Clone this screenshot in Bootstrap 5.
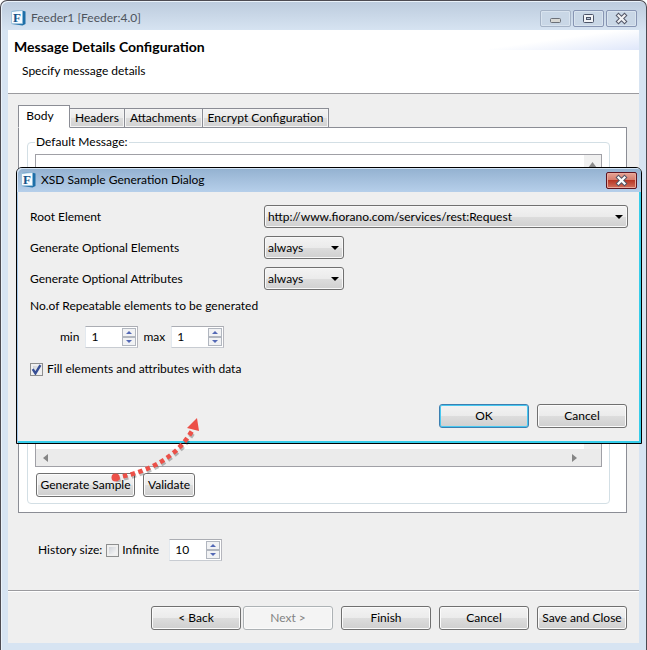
<!DOCTYPE html>
<html lang="en">
<head>
<meta charset="utf-8">
<meta name="viewport" content="width=device-width, initial-scale=1">
<title>Feeder1 [Feeder:4.0]</title>
<link href="https://cdn.jsdelivr.net/npm/bootstrap@5.3.0/dist/css/bootstrap.min.css" rel="stylesheet">
<style>
body { font-family: Lato, "Open Sans", sans-serif; font-size: 12px; line-height: 16px; color: #000; background: #fff; }
.app-window { min-height: 100vh; border: 1px solid #4d4b52; border-width: 1px 1px 0; border-radius: 7px 7px 0 0; background: linear-gradient(#bccbdd, #d7e4f2 30px); padding: 0 7px 7px; box-shadow: inset 1px 1px 0 #eaf2fa; }
.title-bar { height: 29px; padding: 4px 2px 0 3px; gap: 5px; }
.app-window > .title-bar { color: #4e545c; padding-top: 5px; }
.win-btn { width: 31px; height: 17px; padding: 0; border: 1px solid #8795b3; border-radius: 2px; background: #c9d7e6; line-height: 0; box-shadow: inset 0 0 0 1px #d9e4ef; }
.win-btn.quiet { border-color: #a5b3c6; }
.win-btn.quiet, .win-btn.mid { margin-right: 2px; }
.win-btn.close-red { border-color: #5d1420; background: linear-gradient(#e5a496, #d67b6b 48%, #b73625 50%, #d2705c); box-shadow: inset 0 0 0 1px #e9a99c; }
.client { background: #efefef; }
.page-head { height: 64px; background: linear-gradient(172deg, transparent 45%, #dfe7fa) right top / 150px 20px no-repeat #fff; border-bottom: 1px solid #9b9b9f; padding: 8px 6px; }
.page-head h1 { font-size: 14px; line-height: 18px; font-weight: 700; margin: 0 0 7px; }
.page-head p { padding-left: 8px; margin: 0; }
.tab-area { padding: 11px 12px 0 10px; }
.tab-row { position: relative; margin-bottom: -1px; }
.tab-btn { height: 20px; padding: 0 5px; border: 1px solid #8b8d95; border-left-width: 0; background: linear-gradient(#f3f3f3, #ebebeb 50%, #dcdcdc 52%, #d2d2d2); box-shadow: inset 0 0 0 1px #f5f5f5; line-height: 18px; }
.tab-btn.current { width: 52px; height: 23px; border-left-width: 1px; border-bottom-color: #fff; background: #fff; padding: 0 15px 2px 7px; box-shadow: none; }
.tab-pane-box { background: #fff; border: 1px solid #8b8d95; padding: 6px 16px 8px 8px; }
.group { border: 1px solid #d3dfe5; border-radius: 4px; padding: 4px 7px 6px; margin: 0; }
.group legend { float: none; width: auto; font-size: 12px; line-height: 16px; margin: 0; padding: 0 2px 0 1px; }
.editor { border: 1px solid #a0a0a6; margin-bottom: 6px; }
.editor textarea { border: 0; resize: none; height: 294px; outline: 0; padding: 2px; display: block; min-width: 0; }
.bar-v { width: 17px; background: #f0f0f0; text-align: center; line-height: 0; padding-top: 7px; }
.bar-h { height: 17px; background: #ebebeb; padding: 0 24px 0 7px; }
.editor-actions { padding-left: 1px; }
.cbtn { height: 24px; min-width: 90px; padding: 0 3px; font-size: 12px; line-height: 20px; color: #000; border: 1px solid #707070; border-radius: 3px; background: linear-gradient(#f3f3f3, #ebebeb 50%, #dddddd 51%, #cfcfcf); box-shadow: inset 0 0 0 1px #fbfbfb; white-space: nowrap; }
.cbtn.fit { min-width: 52px; }
.cbtn.wide { min-width: 99px; }
.cbtn:disabled { color: #838383; border-color: #adb2b5; background: #f4f4f4; }
.cbtn.primary { border-color: #3c7fb1; box-shadow: inset 0 0 0 1px #48c8f0; }
.spin { width: 53px; height: 22px; border: 1px solid #e3e9ef; border-top-color: #abadb3; border-right: 1px solid #b5b6bd; border-bottom-color: #c8ccd2; background: #fff; padding: 1px; }
.spin input { width: 35px; border: 0; outline: 0; padding: 0 0 0 4px; line-height: 16px; appearance: textfield; -moz-appearance: textfield; background: transparent; }
.spin input::-webkit-inner-spin-button { appearance: none; -webkit-appearance: none; margin: 0; }
.spin button { width: 14px; height: 9px; border: 1px solid #b1b6bf; background: #f1f2f4; padding: 0; line-height: 0; display: flex; align-items: center; justify-content: center; }
.tick { appearance: none; -webkit-appearance: none; width: 13px; height: 13px; margin: 0; border: 1px solid #8e8f8f; background: linear-gradient(135deg, #cfd3d9, #f6f6f6) content-box #f4f4f4; padding: 2px; }
.tick:checked { background: url("data:image/svg+xml,%3Csvg xmlns='http://www.w3.org/2000/svg' viewBox='0 0 11 11'%3E%3Cpath d='M2.3 5.2 4.6 8.8 8.8 1.8' fill='none' stroke='%23374f95' stroke-width='2'/%3E%3C/svg%3E") border-box, linear-gradient(135deg, #cfd3d9, #f6f6f6) content-box #f4f4f4; }
.history { padding: 26px 0 0 30px; }
.history .tick { margin: 0 3px 0 4px; }
.history .spin { margin-left: 10px; }
.foot { border-top: 1px solid #9b9b9f; box-shadow: inset 0 1px 0 #fff; padding: 15px 12px 13px; }
.foot .step-pair { gap: 2px; }
.dialog { position: absolute; left: 15px; right: 4px; top: 166px; border: 1px solid #000; border-radius: 6px 6px 0 0; background: #efefef; box-shadow: inset 1px 0 0 #a9c9ea, inset -2px -2px 0 #36cdea; padding-bottom: 15px; }
.dialog .title-bar { height: 24px; background: linear-gradient(#93b1d0, #b6cfea); border-radius: 5px 5px 0 0; padding: 4px 4px 0 4px; box-shadow: inset 1px 1px 0 #d5e5f5; }
.dialog-body { padding: 13px 13px 0; }
.field-row { height: 23px; margin-bottom: 8px; }
.field-row label { width: 234px; flex: none; }
.repeat-row { margin: 12px 0 13px; padding-left: 30px; }
.repeat-row label { margin-right: 6px; }
.repeat-row .spin + label { margin-left: 5px; }
.dialog-actions { margin-top: 27px; padding-right: 1px; }
.combo { appearance: none; -webkit-appearance: none; height: 23px; width: 80px; border: 1px solid #707070; border-radius: 3px; padding: 0 16px 0 3px; color: #000; background: url("data:image/svg+xml,%3Csvg xmlns='http://www.w3.org/2000/svg' width='8' height='4'%3E%3Cpath d='M0 0h8L4 4z'/%3E%3C/svg%3E") right 4px center no-repeat, linear-gradient(#f3f3f3, #ebebeb 50%, #dddddd 51%, #d0d0d0); box-shadow: inset 0 0 0 1px #f8f8f8; }
.combo.full { width: auto; flex: 1; }
.pointer-arrow { position: absolute; left: 105px; top: 410px; pointer-events: none; }
.logo { flex: none; }
</style>
</head>
<body>
<div class="app-window d-flex flex-column position-relative">
  <header class="title-bar d-flex align-items-start">
    <svg class="logo mt-1" width="15" height="16" viewBox="0 0 15 16"><path d="M1 1l10-.6 3.500 1V14l-3 1.600L1 14z" fill="#1e6fa8"/><path d="M.5 1.500 11.500.5v13.200L.5 13.700z" fill="#f6fbff" stroke="#8cbad8" stroke-width=".7"/><text x="2" y="11.500" font-family="Liberation Serif, serif" font-weight="700" font-size="13" fill="#15548a">F</text></svg>
    <span class="flex-grow-1 pt-1">Feeder1 [Feeder:4.0]</span>
    <div class="d-flex pt-1">
      <button class="win-btn quiet" type="button" aria-label="Minimize"><svg width="29" height="15"><rect x="9.500" y="7.500" width="10" height="4" rx="1" fill="#d8d8d4" stroke="#6b7078"/></svg></button>
      <button class="win-btn mid" type="button" aria-label="Maximize"><svg width="29" height="15"><rect x="9.500" y="3.500" width="10" height="8" rx="1" fill="#f2f4f7" stroke="#4c5468"/><rect x="12.500" y="6.500" width="4" height="2" fill="#b9c7d8" stroke="#4c5468"/></svg></button>
      <button class="win-btn" type="button" aria-label="Close"><svg width="29" height="15"><path d="M11.500 4.500l6 6M17.500 4.500l-6 6" stroke="#535666" stroke-width="4.200" stroke-linecap="square"/><path d="M11.500 4.500l6 6M17.500 4.500l-6 6" stroke="#f1f2f4" stroke-width="2.200" stroke-linecap="square"/></svg></button>
    </div>
  </header>

  <main class="client flex-grow-1 d-flex flex-column">
    <section class="page-head">
      <h1>Message Details Configuration</h1>
      <p>Specify message details</p>
    </section>

    <section class="tab-area">
      <div class="tab-row d-flex align-items-end" role="tablist">
        <button class="tab-btn current" type="button" role="tab" aria-selected="true">Body</button>
        <button class="tab-btn" type="button" role="tab">Headers</button>
        <button class="tab-btn" type="button" role="tab">Attachments</button>
        <button class="tab-btn" type="button" role="tab">Encrypt Configuration</button>
      </div>
      <div class="tab-pane-box">
        <fieldset class="group">
          <legend>Default Message:</legend>
          <div class="editor">
            <div class="d-flex">
              <textarea class="flex-grow-1" aria-label="Default Message"></textarea>
              <div class="bar-v"><svg width="9" height="6"><path d="M4.500 0 9 6H0z" fill="#8c8c8c"/></svg></div>
            </div>
            <div class="bar-h d-flex justify-content-between align-items-center">
              <svg width="5" height="8"><path d="M5 0v8L0 4z" fill="#858585"/></svg>
              <svg width="5" height="8"><path d="M0 0v8l5-4z" fill="#858585"/></svg>
            </div>
          </div>
          <div class="editor-actions d-flex gap-2">
            <button class="cbtn wide" type="button">Generate Sample</button>
            <button class="cbtn fit" type="button">Validate</button>
          </div>
        </fieldset>
      </div>
    </section>

    <section class="history d-flex align-items-center">
      <span id="hist">History size:</span>
      <input class="tick" type="checkbox" id="inf"><label for="inf">Infinite</label>
      <div class="spin d-flex align-items-center"><input type="number" value="10" aria-labelledby="hist">
        <div><button type="button" aria-label="Increase"><svg width="6" height="3"><path d="M3 0l3 3H0z" fill="#5368b5"/></svg></button><button type="button" aria-label="Decrease"><svg width="6" height="3"><path d="M0 0h6L3 3z" fill="#5368b5"/></svg></button></div>
      </div>
    </section>

    <footer class="foot d-flex justify-content-end gap-2 mt-auto">
      <div class="step-pair d-flex"><button class="cbtn" type="button">&lt; Back</button><button class="cbtn" type="button" disabled>Next &gt;</button></div>
      <button class="cbtn" type="button">Finish</button>
      <button class="cbtn" type="button">Cancel</button>
      <button class="cbtn" type="button">Save and Close</button>
    </footer>
  </main>

  <div class="dialog" role="dialog" aria-label="XSD Sample Generation Dialog">
    <header class="title-bar d-flex align-items-start">
      <svg class="logo" width="15" height="16" viewBox="0 0 15 16"><path d="M1 1l10-.6 3.500 1V14l-3 1.600L1 14z" fill="#1e6fa8"/><path d="M.5 1.500 11.500.5v13.200L.5 13.700z" fill="#f6fbff" stroke="#8cbad8" stroke-width=".7"/><text x="2" y="11.500" font-family="Liberation Serif, serif" font-weight="700" font-size="13" fill="#15548a">F</text></svg>
      <span class="flex-grow-1">XSD Sample Generation Dialog</span>
      <button class="win-btn close-red" type="button" aria-label="Close dialog"><svg width="29" height="15"><path d="M11.500 4.500l6 6M17.500 4.500l-6 6" stroke="#535666" stroke-width="4.200" stroke-linecap="square"/><path d="M11.500 4.500l6 6M17.500 4.500l-6 6" stroke="#fff" stroke-width="2.200" stroke-linecap="square"/></svg></button>
    </header>
    <div class="dialog-body">
      <div class="field-row d-flex align-items-center"><label for="root">Root Element</label><select class="combo full" id="root"><option>http://www.fiorano.com/services/rest:Request</option></select></div>
      <div class="field-row d-flex align-items-center"><label for="oe">Generate Optional Elements</label><select class="combo" id="oe"><option>always</option></select></div>
      <div class="field-row d-flex align-items-center"><label for="oa">Generate Optional Attributes</label><select class="combo" id="oa"><option>always</option></select></div>
      <div>No.of Repeatable elements to be generated</div>
      <div class="repeat-row d-flex align-items-center">
        <label for="mn">min</label>
        <div class="spin d-flex align-items-center"><input type="number" value="1" id="mn">
          <div><button type="button" aria-label="Increase min"><svg width="6" height="3"><path d="M3 0l3 3H0z" fill="#5368b5"/></svg></button><button type="button" aria-label="Decrease min"><svg width="6" height="3"><path d="M0 0h6L3 3z" fill="#5368b5"/></svg></button></div>
        </div>
        <label for="mx">max</label>
        <div class="spin d-flex align-items-center"><input type="number" value="1" id="mx">
          <div><button type="button" aria-label="Increase max"><svg width="6" height="3"><path d="M3 0l3 3H0z" fill="#5368b5"/></svg></button><button type="button" aria-label="Decrease max"><svg width="6" height="3"><path d="M0 0h6L3 3z" fill="#5368b5"/></svg></button></div>
        </div>
      </div>
      <div class="d-flex align-items-center"><input class="tick me-1" type="checkbox" id="fill" checked><label for="fill">Fill elements and attributes with data</label></div>
      <div class="dialog-actions d-flex justify-content-end gap-2"><button class="cbtn primary" type="button">OK</button><button class="cbtn" type="button">Cancel</button></div>
    </div>
  </div>

  <svg class="pointer-arrow" width="110" height="80" viewBox="106 411 110 80">
    <g opacity=".25" transform="translate(1 2)"><path d="M115 478Q170 468 192 431" fill="none" stroke="#000" stroke-width="4.600" stroke-dasharray="4.500 3.500" stroke-dashoffset="-8"/></g>
    <path d="M115 478Q170 468 192 431" fill="none" stroke="#ec5048" stroke-width="4.600" stroke-dasharray="4.500 3.500" stroke-dashoffset="-8"/>
    <circle cx="115.500" cy="477.500" r="4" fill="#ec5048"/><path d="M197 418l2 13-12-3z" fill="#ec5048"/>
  </svg>
</div>
<script src="https://cdn.jsdelivr.net/npm/bootstrap@5.3.0/dist/js/bootstrap.bundle.min.js"></script>
</body>
</html>
